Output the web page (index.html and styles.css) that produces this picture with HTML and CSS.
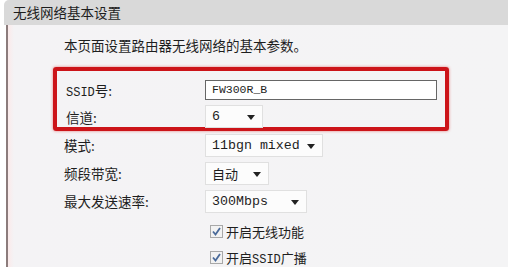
FILE: index.html
```html
<!DOCTYPE html>
<html lang="zh-CN">
  <head>
    <meta charset="UTF-8" />
    <meta name="viewport" content="width=device-width, initial-scale=1.0" />
    <title>无线网络基本设置</title>
    <link rel="stylesheet" href="styles.css">
  </head>
  <body>
    <div class="title-bar">无线网络基本设置</div>
    <div class="panel">
      <p class="intro">本页面设置路由器无线网络的基本参数。</p>

      <div class="highlight">
        <div class="row">
          <span class="label"><span class="latin">SSID</span>号:</span>
          <div class="text-input">FW300R_B</div>
        </div>
        <div class="row">
          <span class="label">信道:</span>
          <div class="select channel">6</div>
        </div>
      </div>

      <div class="row plain">
        <span class="label">模式:</span>
        <div class="select mode">11bgn mixed</div>
      </div>
      <div class="row plain">
        <span class="label">频段带宽:</span>
        <div class="select band">自动</div>
      </div>
      <div class="row plain">
        <span class="label">最大发送速率:</span>
        <div class="select rate">300Mbps</div>
      </div>

      <div class="check-row first">
        <span class="checkbox">
          <svg viewBox="0 0 13 13" width="13" height="13">
            <path d="M3 6.5 L5.5 9.5 L10 3" fill="none" stroke="#4a6a9a" stroke-width="1.8" />
          </svg>
        </span>
        <span>开启无线功能</span>
      </div>
      <div class="check-row">
        <span class="checkbox">
          <svg viewBox="0 0 13 13" width="13" height="13">
            <path d="M3 6.5 L5.5 9.5 L10 3" fill="none" stroke="#4a6a9a" stroke-width="1.8" />
          </svg>
        </span>
        <span>开启<span class="latin">SSID</span>广播</span>
      </div>
    </div>
  </body>
</html>
```

FILE: styles.css
```css
* {
  box-sizing: border-box;
}

body {
  margin: 0;
  background: #ffffff;
  color: #1e1e1e;
  font-family: "Noto Sans CJK SC", "DejaVu Sans", sans-serif;
  font-size: 13.5px;
  overflow: hidden;
}

.latin {
  font-family: "Liberation Mono", "Noto Sans CJK SC", monospace;
  font-size: 12px;
}

.title-bar {
  height: 25px;
  margin-left: 4px;
  padding-left: 9px;
  line-height: 24px;
  background: #d9d9d9;
  border-top-left-radius: 5px;
}

.panel {
  margin-left: 6px;
  height: 242px;
  border-left: 2px solid #8c7c7c;
  background: linear-gradient(90deg, #fbeaea 0, #f4f3f5 6px, #f4f4f5 100%);
  padding-top: 9px;
}

.intro {
  margin: 0 0 11px 56px;
  line-height: 22px;
}

.highlight {
  width: 396px;
  height: 64px;
  margin-left: 45px;
  padding: 5px 0 0 9px;
  border: 4px solid #cc1419;
  border-radius: 3px;
  box-shadow: 0 0 3px rgba(220, 40, 40, 0.6);
}

.row {
  display: flex;
  align-items: center;
  height: 26px;
}

.row.plain {
  height: 28px;
  margin-left: 56px;
}

.highlight .row {
  height: 27px;
}

.label {
  width: 141px;
  flex: none;
}

.highlight .label {
  width: 139px;
}

.text-input {
  width: 232px;
  height: 20px;
  border: 1px solid #666;
  background: #fff;
  padding-left: 6px;
  font-family: "Liberation Mono", monospace;
  font-size: 11.5px;
  line-height: 18px;
}

.select {
  position: relative;
  height: 23px;
  border: 1px solid #e0e0e0;
  background: #fcfcfc;
  padding-left: 6px;
  line-height: 21px;
  font-family: "Liberation Mono", "Noto Sans CJK SC", monospace;
  font-size: 13.3px;
}

.select::after {
  content: "";
  position: absolute;
  right: 7px;
  top: 9px;
  border-left: 4px solid transparent;
  border-right: 4px solid transparent;
  border-top: 5px solid #222;
}

.channel {
  width: 58px;
}

.mode {
  width: 118px;
}

.band {
  width: 64px;
  font-family: "Noto Sans CJK SC", sans-serif;
  font-size: 13px;
}

.rate {
  width: 102px;
}

.check-row {
  display: flex;
  align-items: center;
  gap: 3px;
  height: 26px;
  margin-left: 202px;
  font-size: 13px;
}

.check-row.first {
  margin-top: 3px;
}

.checkbox {
  display: flex;
  width: 13px;
  height: 13px;
  border: 1px solid #a8a8a8;
  background: #f2f2f2;
}

.checkbox svg {
  margin: -1px;
}
```
